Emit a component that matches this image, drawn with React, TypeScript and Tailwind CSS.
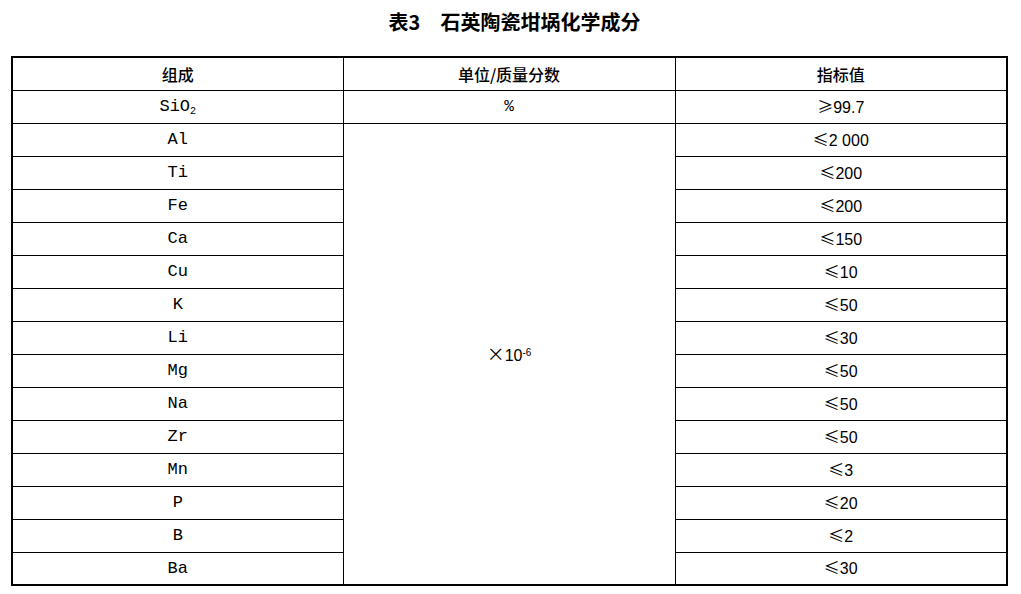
const rows: [string, string][] = [
  ["Al", "2 000"],
  ["Ti", "200"],
  ["Fe", "200"],
  ["Ca", "150"],
  ["Cu", "10"],
  ["K", "50"],
  ["Li", "30"],
  ["Mg", "50"],
  ["Na", "50"],
  ["Zr", "50"],
  ["Mn", "3"],
  ["P", "20"],
  ["B", "2"],
  ["Ba", "30"],
];

const cjk = "font-['Noto_Sans_CJK_SC',sans-serif]";
const el = "font-['Liberation_Mono','Noto_Sans_CJK_SC',monospace]";
const num = "font-['Liberation_Sans','Noto_Sans_CJK_SC',sans-serif]";
const cell = "h-[33px] border-[1.5px] border-black p-0 text-center align-middle text-[16px] leading-none text-black";

export default function App() {
  return (
    <div className="h-[594px] w-[1021px] bg-white">
      <div className="flex h-[56px] items-start justify-center pt-[9px] pl-[8px]">
        <h1 className={`${cjk} text-[20px] font-bold leading-[26px] text-black`}>
          表3<span className="inline-block w-[20px]" />石英陶瓷坩埚化学成分
        </h1>
      </div>
      <table className="ml-[11px] w-[995px] table-fixed border-collapse border-2 border-black">
        <colgroup>
          <col className="w-[331px]" />
          <col className="w-[332px]" />
          <col className="w-[332px]" />
        </colgroup>
        <thead>
          <tr>
            <th className={`${cell} ${cjk} font-medium`}>组成</th>
            <th className={`${cell} ${cjk} font-medium`}>单位/质量分数</th>
            <th className={`${cell} ${cjk} font-medium`}>指标值</th>
          </tr>
        </thead>
        <tbody>
          <tr>
            <td className={`${cell} ${el} text-[17px]`}>
              SiO<sub className="text-[10px]">2</sub>
            </td>
            <td className={`${cell} ${el}`}>%</td>
            <td className={`${cell} ${num}`}>
              <span className={`${cjk} text-[16px]`}>≥</span>99.7
            </td>
          </tr>
          {rows.map(([name, value], i) => (
            <tr key={name}>
              <td className={`${cell} ${el} text-[17px]`}>{name}</td>
              {i === 0 && (
                <td rowSpan={rows.length} className={`${cell} ${num}`}>
                  <span className={`${cjk} text-[18px]`}>×</span>10
                  <sup className="text-[10px]">-6</sup>
                </td>
              )}
              <td className={`${cell} ${num}`}>
                <span className={`${cjk} text-[16px]`}>≤</span>
                {value}
              </td>
            </tr>
          ))}
        </tbody>
      </table>
    </div>
  );
}
